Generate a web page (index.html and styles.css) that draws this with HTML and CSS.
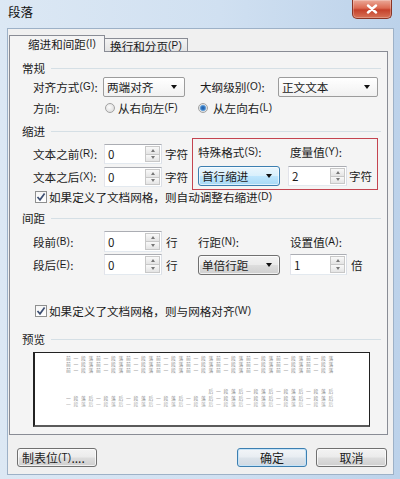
FILE: index.html
```html
<!DOCTYPE html>
<html lang="zh-CN">
<head>
<meta charset="utf-8">
<title>段落</title>
<link rel="stylesheet" href="styles.css">
</head>
<body>
<div class="window">
  <div class="titlebar">
    <span class="title">段落</span>
    <div class="close"><svg width="12" height="10" viewBox="0 0 12 10"><path d="M2 1.5 L10 8.5 M10 1.5 L2 8.5" stroke="#fff" stroke-width="2.4" stroke-linecap="round"/></svg></div>
  </div>
  <div class="client">
    <div class="tabs">
      <div class="tab active">缩进和间距<span class="k">(I)</span></div>
      <div class="tab">换行和分页<span class="k">(P)</span></div>
    </div>
    <div class="panel">
      <div class="head"><span>常规</span><i class="line"></i></div>
      <div class="row r1">
        <span class="lab w70">对齐方式<span class="k">(G)</span>:</span>
        <div class="combo w82"><span>两端对齐</span><b class="arrow"></b></div>
        <span class="lab w78 ml15">大纲级别<span class="k">(O)</span>:</span>
        <div class="combo w100"><span>正文文本</span><b class="arrow"></b></div>
      </div>
      <div class="row r2">
        <span class="lab w71">方向:</span>
        <span class="ritem w94"><i class="radio"></i>从右向左<span class="k">(F)</span></span>
        <span class="ritem"><i class="radio on"></i>从左向右<span class="k">(L)</span></span>
      </div>
      <div class="head h-ind"><span>缩进</span><i class="line"></i></div>
      <div class="indent">
        <div class="leftcol">
          <div class="row r3">
            <span class="lab w71">文本之前<span class="k">(R)</span>:</span>
            <div class="spin w58"><span>0</span><span class="btns"><i class="up"></i><i class="dn"></i></span></div>
            <span class="unit">字符</span>
          </div>
          <div class="row r4">
            <span class="lab w71">文本之后<span class="k">(X)</span>:</span>
            <div class="spin w58"><span>0</span><span class="btns"><i class="up"></i><i class="dn"></i></span></div>
            <span class="unit">字符</span>
          </div>
        </div>
        <div class="redbox">
          <div class="row ra">
            <span class="lab w92">特殊格式<span class="k">(S)</span>:</span>
            <span class="lab">度量值<span class="k">(Y)</span>:</span>
          </div>
          <div class="row rb">
            <div class="combo hl w82"><span>首行缩进</span><b class="arrow"></b></div>
            <div class="spin w59 ml8"><span>2</span><span class="btns"><i class="up"></i><i class="dn"></i></span></div>
            <span class="unit u2">字符</span>
          </div>
        </div>
      </div>
      <div class="check-row c1"><i class="check"><svg width="10" height="10" viewBox="0 0 10 10"><path d="M1.5 5 L4 7.8 L8.6 1.6" fill="none" stroke="#3d4f73" stroke-width="1.7"/></svg></i>如果定义了文档网格，则自动调整右缩进<span class="k">(D)</span></div>
      <div class="head h-sp"><span>间距</span><i class="line"></i></div>
      <div class="row r5">
        <span class="lab w71">段前<span class="k">(B)</span>:</span>
        <span class="cell w94"><div class="spin w58"><span>0</span><span class="btns"><i class="up"></i><i class="dn"></i></span></div><span class="unit">行</span></span>
        <span class="lab w92">行距<span class="k">(N)</span>:</span>
        <span class="lab">设置值<span class="k">(A)</span>:</span>
      </div>
      <div class="row r6">
        <span class="lab w71">段后<span class="k">(E)</span>:</span>
        <span class="cell w94"><div class="spin w58"><span>0</span><span class="btns"><i class="up"></i><i class="dn"></i></span></div><span class="unit">行</span></span>
        <span class="cell w92"><div class="combo gray w82"><span>单倍行距</span><b class="arrow"></b></div></span>
        <div class="spin w57"><span>1</span><span class="btns"><i class="up"></i><i class="dn"></i></span></div>
        <span class="unit">倍</span>
      </div>
      <div class="check-row c2"><i class="check"><svg width="10" height="10" viewBox="0 0 10 10"><path d="M1.5 5 L4 7.8 L8.6 1.6" fill="none" stroke="#3d4f73" stroke-width="1.7"/></svg></i>如果定义了文档网格，则与网格对齐<span class="k">(W)</span></div>
      <div class="head h-pv"><span>预览</span><i class="line"></i></div>
      <div class="preview">
        <div class="pv-text">
          <p>前一段落前一段落前一段落前一段落前一段落前一段落前一段落前一段落前一段落</p>
          <p>前一段落前一段落前一段落前一段落前一段落前一段落前一段落前一段落前一段落</p>
          <p>前一段落前一段落前一段落前一段落前一段落前一段落前一段落前一段落前一段落</p>
          <p class="pv-right">后一段落后一段落后一段落后一段落后</p>
          <p>一段落后一段落后一段落后一段落后一段落后一段落后一段落后一段落后一段落后</p>
          <p class="pv-last">一段落后一段落后一段落后一段落后一段落后一段落后一段落后一段落后一段落后</p>
        </div>
      </div>
    </div>
    <div class="buttons">
      <div class="btn tabs-btn">制表位<span class="k">(T)</span>....</div>
      <div class="btn default ok">确定</div>
      <div class="btn cancel">取消</div>
    </div>
  </div>
</div>
</body>
</html>
```

FILE: styles.css
```css
* { box-sizing: border-box; }
html, body { margin: 0; padding: 0; }
body {
  width: 400px;
  height: 479px;
  overflow: hidden;
  font-family: "Noto Sans CJK SC", "Noto Sans", sans-serif;
  font-size: 11.6px;
  line-height: 14px;
  color: #1b1b1b;
}
.k {
  font-family: "Liberation Sans", sans-serif;
  font-size: 10px;
  letter-spacing: 0.2px;
}
.window {
  width: 400px;
  height: 479px;
  background: linear-gradient(90deg, #dce8f4 0%, #d0e0f1 55%, #bcd2ea 100%);
  padding: 0 6px 4px 7px;
  display: flex;
  flex-direction: column;
}
.titlebar {
  height: 28px;
  flex: none;
  display: flex;
  align-items: flex-start;
  justify-content: space-between;
}
.title {
  margin: 5px 0 0 1px;
  font-size: 12.5px;
  line-height: 14px;
  color: #111;
}
.close {
  width: 40px;
  height: 19px;
  margin-right: 2px;
  border: 1px solid #8a3526;
  border-top: none;
  border-radius: 0 0 5px 5px;
  background: linear-gradient(#eba998 0%, #dc6a52 45%, #c5412b 55%, #d77358 100%);
  display: flex;
  align-items: center;
  justify-content: center;
  box-shadow: inset 0 0 0 1px rgba(255,255,255,0.25);
}
.client {
  flex: 1;
  border: 1px solid #9db1c7;
  background: #f0f0f0;
  padding: 0 5px 0 1px;
  display: flex;
  flex-direction: column;
}
.tabs {
  height: 23px;
  flex: none;
  display: flex;
  align-items: flex-end;
  margin-bottom: -1px;
  position: relative;
  z-index: 1;
}
.tab {
  display: flex;
  align-items: center;
  justify-content: center;
  border: 1px solid #898c95;
  white-space: nowrap;
}
.tab.active {
  width: 96px;
  height: 17px;
  border-bottom: none;
  background: #f4f4f4;
  padding: 0 0 1px 10px;
}
.tab:not(.active) {
  width: 83px;
  height: 14px;
  border-left: none;
  background: linear-gradient(#f3f3f3, #e4e4e4);
  padding-top: 1px;
}
.panel {
  width: 379px;
  height: 384px;
  flex: none;
  border: 1px solid #898c95;
  background: #f4f4f4;
  padding: 0 6px 0 12px;
}
.head {
  height: 16px;
  display: flex;
  align-items: center;
  margin-top: 8px;
}
.head .line {
  flex: 1;
  height: 1px;
  background: #d5dfe5;
  margin-left: 6px;
}
.h-ind { margin-top: 6px; height: 14px; }
.h-sp { margin-top: 6px; }
.h-pv { margin-top: 13px; }

.row {
  display: flex;
  align-items: center;
  margin-left: 11px;
  white-space: nowrap;
}
.r1 { height: 20px; margin-top: 1px; }
.r2 { height: 20px; margin-top: 1px; }
.r3 { height: 20px; margin-left: 0; }
.r4 { height: 20px; margin-top: 3px; margin-left: 0; }
.r5 { height: 21px; margin-top: 5px; }
.r6 { height: 21px; margin-top: 2px; }
.ra { height: 20px; margin-left: 0; }
.rb { height: 20px; margin-top: 4px; margin-left: 0; }

.lab, .cell { flex: none; display: flex; align-items: center; }
.w57 { width: 57px; }
.w58 { width: 58px; }
.w59 { width: 59px; }
.w70 { width: 70px; }
.w71 { width: 71px; }
.w78 { width: 78px; }
.w82 { width: 82px; }
.w92 { width: 92px; }
.w94 { width: 94px; }
.w100 { width: 100px; }
.ml15 { margin-left: 15px; }
.ml8 { margin-left: 8px; }
.unit { margin-left: 3px; }
.cell .unit { margin-left: 4px; }
.r6 > .unit { margin-left: 4px; }
.u2 { margin-left: 2px; }

.combo {
  flex: none;
  height: 20px;
  border: 1px solid #9c9c9c;
  border-radius: 2px;
  background: linear-gradient(#ffffff, #f1f1f1);
  display: flex;
  align-items: center;
  justify-content: space-between;
  padding: 0 7px 0 3px;
}
.combo.hl {
  border-color: #3c7fb1;
  border-radius: 3px;
  background: linear-gradient(#eaf6fd 0%, #d9f0fc 48%, #bee6fd 52%, #a7d9f5 100%);
  box-shadow: inset 0 0 0 1px rgba(255,255,255,0.6);
}
.combo.gray {
  border-color: #707070;
  border-radius: 3px;
  background: linear-gradient(#f3f3f3 0%, #ebebeb 48%, #dddddd 52%, #cfcfcf 100%);
  box-shadow: inset 0 0 0 1px rgba(255,255,255,0.7);
}
.arrow {
  width: 0;
  height: 0;
  border-left: 3.5px solid transparent;
  border-right: 3.5px solid transparent;
  border-top: 4px solid #111;
}

.ritem { display: flex; align-items: center; flex: none; }
.radio {
  width: 10px;
  height: 10px;
  border-radius: 50%;
  border: 1px solid #a2a2a2;
  background: radial-gradient(circle at 40% 40%, #fbfbfb, #d5d5d5);
  margin: 0 3px 0 1px;
  flex: none;
}
.radio.on {
  background: radial-gradient(circle, #1c5aa6 0, #3a7ec6 2px, #8ab9e4 3px, #e6e6e6 3.6px);
}
.ritem + .ritem .radio { margin-left: 0; margin-right: 5px; }

.indent {
  display: flex;
  align-items: flex-start;
  margin-left: 11px;
}
.leftcol {
  width: 159px;
  padding-top: 6px;
}
.redbox {
  width: 186px;
  height: 52px;
  border: 1px solid #c44450;
  padding: 3px 0 0 5px;
}

.spin {
  flex: none;
  height: 20px;
  border: 1px solid #abadb3;
  border-color: #abadb3 #dbdfe6 #e3e9ef #e2e3ea;
  background: #fff;
  display: flex;
  align-items: center;
  justify-content: space-between;
  padding: 1px 1px 1px 3px;
}
.r5 .spin, .r6 .spin { height: 21px; }
.spin .btns {
  width: 15px;
  height: 100%;
  display: flex;
  flex-direction: column;
}
.spin .btns i {
  flex: 1;
  border: 1px solid #c8c8c8;
  background: linear-gradient(#f9f9f9, #e4e4e4);
  display: flex;
  align-items: center;
  justify-content: center;
}
.spin .btns i + i { border-top: none; }
.up::after {
  content: "";
  border-left: 2.5px solid transparent;
  border-right: 2.5px solid transparent;
  border-bottom: 3px solid #777;
}
.dn::after {
  content: "";
  border-left: 2.5px solid transparent;
  border-right: 2.5px solid transparent;
  border-top: 3px solid #777;
}

.check-row {
  display: flex;
  align-items: center;
  height: 14px;
  margin-left: 13px;
  white-space: nowrap;
}
.c2 { margin-top: 29px; }
.check {
  width: 12px;
  height: 12px;
  border: 1px solid #8e8f8f;
  background: linear-gradient(#f6f6f6, #ffffff);
  margin-right: 2px;
  display: flex;
  align-items: center;
  justify-content: center;
  flex: none;
}

.preview {
  width: 337px;
  height: 75px;
  margin: 5px 0 0 11px;
  background: #fff;
  border: 1px solid #222;
  border-left-width: 2px;
  border-bottom: 2px solid #5a5a5a;
  overflow: hidden;
}
.pv-text {
  width: 540px;
  margin-left: 31px;
  padding-top: 3px;
  font-size: 9.6px;
  letter-spacing: 5.4px;
  line-height: 12px;
  color: #8a8a8a;
  white-space: nowrap;
  transform: scale(0.5);
  transform-origin: 0 0;
}
.pv-text p { margin: 0; height: 12px; }
.pv-text p.pv-right { text-align: right; margin-top: 31px; }
.pv-text p.pv-right + p { margin-top: 1px; }
.pv-text p.pv-last { margin-top: 0; color: #a8a8a8; }

.buttons {
  display: flex;
  align-items: center;
  margin-top: 13px;
  padding-left: 8px;
}
.btn {
  height: 19px;
  border: 1px solid #707070;
  border-radius: 3px;
  background: linear-gradient(#f3f3f3 0%, #ebebeb 48%, #dddddd 52%, #cfcfcf 100%);
  box-shadow: inset 0 0 0 1px rgba(255,255,255,0.7);
  display: flex;
  align-items: center;
  justify-content: center;
  font-size: 12px;
  white-space: nowrap;
}
.tabs-btn { width: 80px; justify-content: flex-start; padding-left: 4px; }
.ok {
  width: 70px;
  margin-left: auto;
  border-color: #3c7fb1;
  background: linear-gradient(#f2f5f8 0%, #e8edf2 48%, #dce3ea 52%, #d0d9e2 100%);
  box-shadow: inset 0 0 0 1px #c6e3f7;
}
.cancel { width: 71px; margin-left: 9px; margin-right: 1px; }
```
